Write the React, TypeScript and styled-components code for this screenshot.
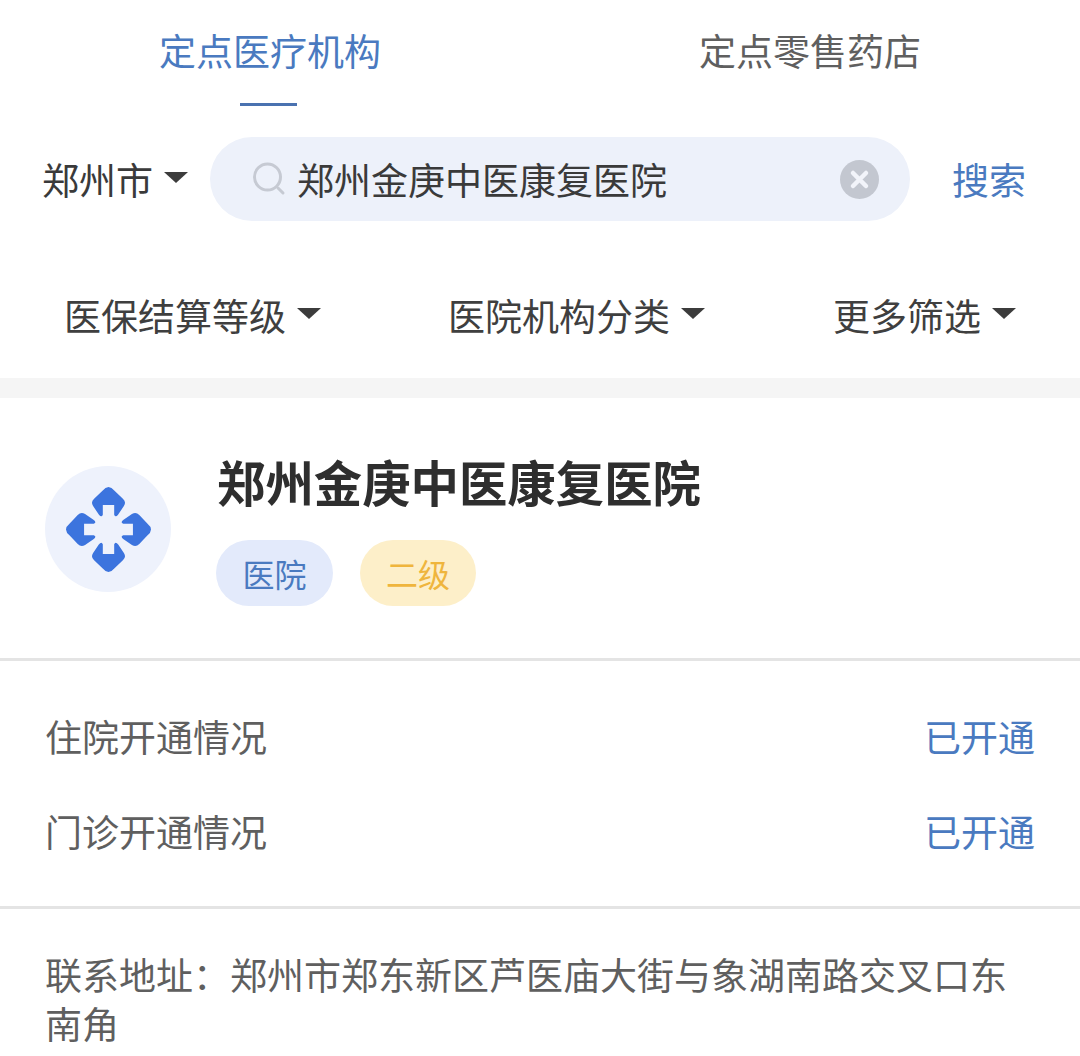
import React from "react";
import styled, { createGlobalStyle } from "styled-components";

const GlobalStyle = createGlobalStyle`
  html, body {
    margin: 0;
    padding: 0;
    background: #ffffff;
  }
  * {
    box-sizing: border-box;
  }
  body {
    font-family: "Noto Sans CJK SC", "Noto Sans", sans-serif;
    font-size: 37px;
    color: #333333;
    overflow: hidden;
  }
`;

const Page = styled.div`
  width: 1080px;
  height: 1056px;
  overflow: hidden;
`;

const Tabs = styled.div`
  display: grid;
  grid-template-columns: 1fr 1fr;
  height: 137px;
`;

const Tab = styled.div<{ $active?: boolean }>`
  display: flex;
  flex-direction: column;
  align-items: center;
  padding-top: 23px;
  color: ${(p) => (p.$active ? "#4a7ac0" : "#5f5f5f")};
  line-height: 54px;
  &::after {
    content: "";
    display: ${(p) => (p.$active ? "block" : "none")};
    width: 57px;
    height: 3px;
    margin: 26px 4px 0 0;
    background: #4a72b0;
  }
`;

const SearchRow = styled.div`
  display: flex;
  align-items: center;
  height: 84px;
  padding-left: 42px;
`;

const CityPicker = styled.div`
  display: flex;
  align-items: center;
  width: 168px;
  gap: 11px;
  color: #3a3a3a;
`;

const Caret = styled.span`
  display: block;
  width: 0;
  height: 0;
  margin-top: -4px;
  border-left: 12px solid transparent;
  border-right: 12px solid transparent;
  border-top: 11px solid #3c3c3c;
`;

const SearchBox = styled.div`
  display: flex;
  align-items: center;
  width: 700px;
  height: 84px;
  padding: 0 31px 0 41px;
  border-radius: 42px;
  background: #edf1fa;
`;

const SearchText = styled.span`
  flex: 1;
  margin-left: 10px;
  color: #3a3a3a;
`;

const SearchAction = styled.span`
  margin-left: 42px;
  color: #4a7ac0;
`;

const Filters = styled.div`
  display: flex;
  align-items: center;
  height: 157px;
  padding-top: 31px;
`;

const Filter = styled.div<{ $left: number; $width: number }>`
  display: flex;
  align-items: center;
  gap: 11px;
  width: ${(p) => p.$width}px;
  padding-left: ${(p) => p.$left}px;
  color: #3f3f3f;
`;

const Band = styled.div`
  height: 20px;
  background: #f5f5f5;
`;

const Card = styled.div`
  display: flex;
  align-items: flex-start;
  gap: 46px;
  height: 263px;
  padding: 68px 0 0 45px;
  border-bottom: 3px solid #e4e4e4;
`;

const Logo = styled.div`
  display: flex;
  align-items: center;
  justify-content: center;
  width: 126px;
  height: 126px;
  border-radius: 50%;
  background: #eef2fc;
`;

const CardBody = styled.div`
  display: flex;
  flex-direction: column;
  margin-top: -15px;
`;

const Title = styled.div`
  font-size: 48.4px;
  font-weight: 700;
  line-height: 60px;
  color: #2e2e2e;
`;

const Tags = styled.div`
  display: flex;
  gap: 27px;
  margin-top: 29px;
  margin-left: -1px;
`;

const Tag = styled.span<{ $tone: "blue" | "gold" }>`
  display: flex;
  align-items: center;
  justify-content: center;
  width: ${(p) => (p.$tone === "blue" ? 117 : 116)}px;
  height: 66px;
  border-radius: 33px;
  font-size: 32px;
  background: ${(p) => (p.$tone === "blue" ? "#e3eafb" : "#fdefc9")};
  color: ${(p) => (p.$tone === "blue" ? "#4a7ac0" : "#efb53d")};
`;

const Status = styled.div`
  display: flex;
  flex-direction: column;
  gap: 41px;
  height: 248px;
  padding: 48px 45px 0;
  border-bottom: 3px solid #e4e4e4;
`;

const StatusRow = styled.div`
  display: flex;
  justify-content: space-between;
  line-height: 54px;
  color: #5f5f5f;
`;

const StatusValue = styled.span`
  color: #4a7ac0;
`;

const Address = styled.div`
  padding: 41px 45px 0;
  line-height: 49px;
  color: #5f5f5f;
`;

function SearchIcon() {
  return (
    <svg width="36" height="36" viewBox="0 0 36 36" fill="none">
      <circle cx="16.5" cy="16" r="13" stroke="#c6cad3" strokeWidth="3" />
      <path d="M27 27l5 5" stroke="#c6cad3" strokeWidth="3" strokeLinecap="round" />
    </svg>
  );
}

function ClearIcon() {
  return (
    <svg width="39" height="39" viewBox="0 0 39 39">
      <circle cx="19.5" cy="19.5" r="19.5" fill="#c3c7d0" />
      <path d="M13 13l13 13M26 13L13 26" stroke="#f2f4fa" strokeWidth="4.5" strokeLinecap="round" />
    </svg>
  );
}

const petal =
  "M-18-116Q0-138 18-116L43-92Q54-82 46-70L29-45Q21-34 17-44L17-73L-17-73L-17-44Q-21-34-29-45L-46-70Q-54-82-43-92Z";

function HospitalIcon() {
  return (
    <svg width="87" height="87" viewBox="-130 -130 260 260" fill="#3c74de">
      {[0, 90, 180, 270].map((angle) => (
        <path key={angle} d={petal} transform={`rotate(${angle})`} />
      ))}
    </svg>
  );
}

const filters = [
  { label: "医保结算等级", left: 64, width: 448 },
  { label: "医院机构分类", left: 0, width: 385 },
  { label: "更多筛选", left: 0, width: 247 },
];

const statusRows = ["住院开通情况", "门诊开通情况"];

export default function App() {
  return (
    <Page>
      <GlobalStyle />
      <Tabs>
        <Tab $active>定点医疗机构</Tab>
        <Tab>定点零售药店</Tab>
      </Tabs>
      <SearchRow>
        <CityPicker>
          郑州市
          <Caret />
        </CityPicker>
        <SearchBox>
          <SearchIcon />
          <SearchText>郑州金庚中医康复医院</SearchText>
          <ClearIcon />
        </SearchBox>
        <SearchAction>搜索</SearchAction>
      </SearchRow>
      <Filters>
        {filters.map((f) => (
          <Filter key={f.label} $left={f.left} $width={f.width}>
            {f.label}
            <Caret />
          </Filter>
        ))}
      </Filters>
      <Band />
      <Card>
        <Logo>
          <HospitalIcon />
        </Logo>
        <CardBody>
          <Title>郑州金庚中医康复医院</Title>
          <Tags>
            <Tag $tone="blue">医院</Tag>
            <Tag $tone="gold">二级</Tag>
          </Tags>
        </CardBody>
      </Card>
      <Status>
        {statusRows.map((label) => (
          <StatusRow key={label}>
            {label}
            <StatusValue>已开通</StatusValue>
          </StatusRow>
        ))}
      </Status>
      <Address>联系地址：郑州市郑东新区芦医庙大街与象湖南路交叉口东南角</Address>
    </Page>
  );
}
